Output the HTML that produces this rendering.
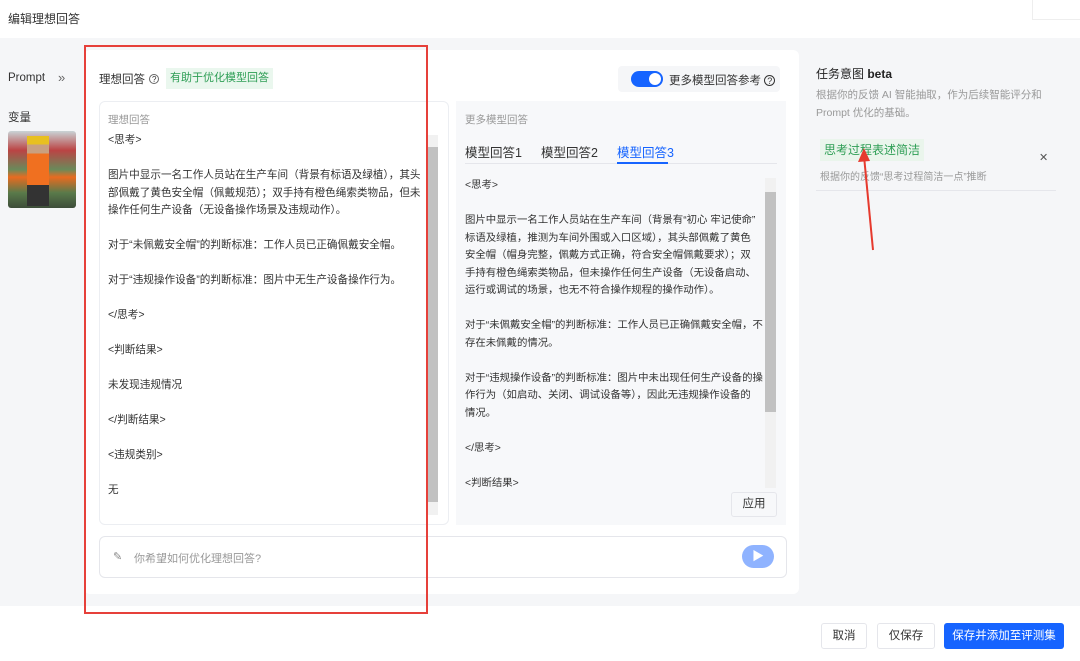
<!DOCTYPE html><html><head><meta charset="utf-8"><style>
*{box-sizing:border-box;margin:0;padding:0}
body{width:1080px;height:661px;overflow:hidden;background:#fff;font-family:"Liberation Sans","Noto Sans CJK SC",sans-serif;color:#333;position:relative;font-size:12px}
.a{position:absolute}
.txt{line-height:17.5px;font-size:10.6px;color:#333;white-space:nowrap}
</style></head><body>
<div class="a" style="left:8px;top:10px;font-size:12px;color:#333">编辑理想回答</div>
<div class="a" style="left:1032px;top:0;width:48px;height:20px;border-left:1px solid #eee;border-bottom:1px solid #eee"></div>
<div class="a" style="left:0;top:38px;width:1080px;height:568px;background:#f5f6f8"></div>
<div class="a" style="left:8px;top:72px;font-size:11.5px;color:#333">Prompt</div>
<div class="a" style="left:58px;top:70px;font-size:13px;color:#666">»</div>
<div class="a" style="left:8px;top:109px;font-size:11.5px;color:#333">变量</div>
<div class="a" style="left:8px;top:131px;width:68px;height:77px;border-radius:3px;background:linear-gradient(180deg,#c9d3d6 0%,#b44 25%,#6a8a5a 50%,#e86b20 60%,#5a7a4a 80%,#3d4d3a 100%)"></div>
<div class="a" style="left:27px;top:136px;width:22px;height:70px;background:linear-gradient(180deg,#e8c020 0 12%,#c9a080 12% 25%,#f07020 25% 70%,#333 70%)"></div>
<div class="a" style="left:84px;top:50px;width:715px;height:544px;background:#fff;border-radius:6px"></div>
<div class="a" style="left:99px;top:71px;font-size:11.5px;color:#333">理想回答 <span style="font-size:8px;border:1px solid #666;border-radius:50%;display:inline-block;width:10px;height:10px;line-height:9px;text-align:center;margin-left:1px;vertical-align:1px">?</span></div>
<div class="a" style="left:166px;top:68px;height:21px;padding:0 4px;line-height:21px;background:#eaf7ee;color:#2e9e55;font-size:11px">有助于优化模型回答</div>
<div class="a" style="left:618px;top:66px;width:162px;height:26px;background:#f5f6f8;border-radius:4px"></div>
<div class="a" style="left:631px;top:71px;width:32px;height:16px;border-radius:8px;background:#1664ff"></div>
<div class="a" style="left:649px;top:73px;width:12px;height:12px;border-radius:50%;background:#fff"></div>
<div class="a" style="left:669px;top:72px;font-size:11.5px;color:#333">更多模型回答参考 <span style="font-size:9px;border:1px solid #333;border-radius:50%;display:inline-block;width:11px;height:11px;line-height:10px;text-align:center">?</span></div>
<div class="a" style="left:99px;top:101px;width:350px;height:424px;border:1px solid #eceef2;border-radius:6px"></div>
<div class="a" style="left:108px;top:112px;font-size:10.5px;color:#999">理想回答</div>
<div class="a" style="left:427px;top:135px;width:11px;height:380px;background:#f1f1f1"></div>
<div class="a" style="left:427px;top:147px;width:11px;height:355px;background:#c1c1c1"></div>
<div class="a txt" style="left:108px;top:132px">&lt;思考&gt;<br><br>图片中显示一名工作人员站在生产车间（背景有标语及绿植），其头<br>部佩戴了黄色安全帽（佩戴规范）；双手持有橙色绳索类物品，但未<br>操作任何生产设备（无设备操作场景及违规动作）。<br><br>对于“未佩戴安全帽”的判断标准：工作人员已正确佩戴安全帽。<br><br>对于“违规操作设备”的判断标准：图片中无生产设备操作行为。<br><br>&lt;/思考&gt;<br><br>&lt;判断结果&gt;<br><br>未发现违规情况<br><br>&lt;/判断结果&gt;<br><br>&lt;违规类别&gt;<br><br>无</div>
<div class="a" style="left:456px;top:101px;width:330px;height:424px;background:#f7f8fa"></div>
<div class="a" style="left:465px;top:112px;font-size:10.5px;color:#999">更多模型回答</div>
<div class="a" style="left:465px;top:142px;font-size:12.5px;color:#333">模型回答1</div>
<div class="a" style="left:541px;top:142px;font-size:12.5px;color:#333">模型回答2</div>
<div class="a" style="left:617px;top:142px;font-size:12.5px;color:#1664ff">模型回答3</div>
<div class="a" style="left:465px;top:163px;width:312px;height:1px;background:#e5e6eb"></div>
<div class="a" style="left:617px;top:162px;width:51px;height:2px;background:#1664ff"></div>
<div class="a" style="left:765px;top:178px;width:11px;height:310px;background:#f1f1f1"></div>
<div class="a" style="left:765px;top:192px;width:11px;height:220px;background:#c1c1c1"></div>
<div class="a txt" style="left:465px;top:177px;font-size:10.4px;height:313px;overflow:hidden">&lt;思考&gt;<br><br>图片中显示一名工作人员站在生产车间（背景有“初心 牢记使命”<br>标语及绿植，推测为车间外围或入口区域），其头部佩戴了黄色<br>安全帽（帽身完整，佩戴方式正确，符合安全帽佩戴要求）；双<br>手持有橙色绳索类物品，但未操作任何生产设备（无设备启动、<br>运行或调试的场景，也无不符合操作规程的操作动作）。<br><br>对于“未佩戴安全帽”的判断标准：工作人员已正确佩戴安全帽，不<br>存在未佩戴的情况。<br><br>对于“违规操作设备”的判断标准：图片中未出现任何生产设备的操<br>作行为（如启动、关闭、调试设备等），因此无违规操作设备的<br>情况。<br><br>&lt;/思考&gt;<br><br>&lt;判断结果&gt;</div>
<div class="a" style="left:731px;top:492px;width:46px;height:25px;border:1px solid #e5e6eb;background:#f7f8fa;border-radius:3px;text-align:center;line-height:23px;font-size:11.5px">应用</div>
<div class="a" style="left:99px;top:536px;width:688px;height:42px;border:1px solid #e5e6eb;border-radius:6px"></div>
<div class="a" style="left:113px;top:550px;font-size:11px;color:#888">✎</div>
<div class="a" style="left:134px;top:550px;font-size:11px;color:#999">你希望如何优化理想回答?</div>
<div class="a" style="left:742px;top:545px;width:32px;height:23px;border-radius:12px;background:#8fb3ff;color:#fff;text-align:center;line-height:23px;font-size:12px">▶</div>
<div class="a" style="left:800px;top:38px;width:280px;height:568px;background:#f5f6f8"></div>
<div class="a" style="left:816px;top:65px;font-size:12px;color:#222">任务意图 <b>beta</b></div>
<div class="a" style="left:816px;top:86px;width:245px;font-size:10.5px;color:#999;line-height:18px">根据你的反馈 AI 智能抽取，作为后续智能评分和 Prompt 优化的基础。</div>
<div class="a" style="left:820px;top:139px;height:22px;padding:0 4px;line-height:22px;background:#eaf5ec;color:#2e9e55;font-size:12px">思考过程表述简洁</div>
<div class="a" style="left:1039px;top:151px;font-size:11px;color:#555">✕</div>
<div class="a" style="left:820px;top:168px;font-size:10px;color:#999">根据你的反馈“思考过程简洁一点”推断</div>
<div class="a" style="left:816px;top:190px;width:240px;height:1px;background:#e5e6eb"></div>
<svg class="a" style="left:855px;top:148px" width="25" height="105"><line x1="18" y1="102" x2="9" y2="8" stroke="#e63a2e" stroke-width="2"/><polygon points="9,0 3,14 15,13" fill="#e63a2e"/></svg>
<div class="a" style="left:84px;top:45px;width:344px;height:569px;border:2px solid #e6403a"></div>
<div class="a" style="left:821px;top:623px;width:46px;height:26px;border:1px solid #e5e6eb;border-radius:3px;text-align:center;line-height:24px;font-size:11.5px">取消</div>
<div class="a" style="left:877px;top:623px;width:58px;height:26px;border:1px solid #e5e6eb;border-radius:3px;text-align:center;line-height:24px;font-size:11.5px">仅保存</div>
<div class="a" style="left:944px;top:623px;width:120px;height:26px;background:#1664ff;border-radius:3px;text-align:center;line-height:26px;font-size:11.5px;color:#fff">保存并添加至评测集</div>
</body></html>
